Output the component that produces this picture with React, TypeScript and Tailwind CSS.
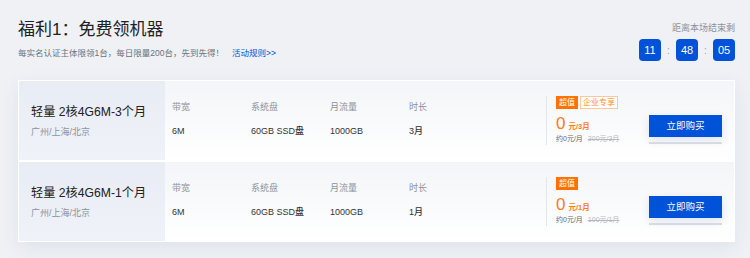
import React from "react";

type Row = {
  title: string;
  duration: string;
  unit: string;
  orig: string;
  enterprise: boolean;
};

const rows: Row[] = [
  { title: "轻量 2核4G6M-3个月", duration: "3月", unit: "元/3月", orig: "300元/3月", enterprise: true },
  { title: "轻量 2核4G6M-1个月", duration: "1月", unit: "元/1月", orig: "100元/1月", enterprise: false },
];

function Spec({ label, value }: { label: string; value: string }) {
  return (
    <div className="w-[79px] flex flex-col pt-[20px]">
      <div className="text-[9px] leading-[12px] text-[#8d929c]">{label}</div>
      <div className="mt-[12px] text-[9px] leading-[12px] text-[#333] font-medium">{value}</div>
    </div>
  );
}

function Card({ r }: { r: Row }) {
  return (
    <div className="flex h-[79px]">
      <div className="w-[146px] bg-gradient-to-b from-[#e8ecf4] to-[#eff2f9] pl-[12px] pt-[24px] flex flex-col">
        <div className="text-[12.2px] leading-[14px] text-[#222]">{r.title}</div>
        <div className="mt-[7px] text-[9px] leading-[12px] text-[#8d929c]">广州/上海/北京</div>
      </div>
      <div className="flex-1 flex bg-gradient-to-b from-[#f3f5f8] to-white">
        <div className="flex pl-[7px]">
          <Spec label="带宽" value="6M" />
          <Spec label="系统盘" value="60GB SSD盘" />
          <Spec label="月流量" value="1000GB" />
          <Spec label="时长" value={r.duration} />
        </div>
        <div className="w-[58px]" />
        <div className="w-px h-[49px] mt-[15px] bg-[#e3e6eb]" />
        <div className="flex-1 pl-[9px] pt-[15px] flex flex-col">
          <div className="flex gap-[2px] h-[13px]">
            <div className="h-[13px] w-[22px] text-center bg-[#ff7200] text-white text-[8px] leading-[13px]">超值</div>
            {r.enterprise && (
              <div className="h-[13px] w-[38px] text-center border border-[#ffc79b] text-[#ff8a2b] text-[8px] leading-[11px] bg-white">
                企业专享
              </div>
            )}
          </div>
          <div className="mt-[6px] flex items-baseline h-[17px]">
            <span className="text-[17px] leading-[17px] text-[#ff7a1a]">0</span>
            <span className="ml-[3px] text-[7.5px] font-bold text-[#ff7a1a]">{r.unit}</span>
          </div>
          <div className="mt-[2px] flex items-center h-[10px] text-[7px] leading-[10px]">
            <span className="text-[#666]">约0元/月</span>
            <span className="ml-[5px] text-[#b4b8bf] line-through">{r.orig}</span>
          </div>
        </div>
        <div className="w-[73px] pt-[34px] flex flex-col">
          <div className="h-[22px] bg-[#0052d9] text-white text-[9.5px] flex items-center justify-center shadow-[0_3px_10px_rgba(0,40,120,0.12)]">
            立即购买
          </div>
          <div className="mt-[5px] h-[2px] bg-[#d6dae1]" />
        </div>
        <div className="w-[12px]" />
      </div>
    </div>
  );
}

export default function App() {
  return (
    <div className="w-[750px] h-[258px] bg-[#eff1f5] pl-[18px] pr-[15px] overflow-hidden font-['Liberation_Sans','Noto_Sans_CJK_SC',sans-serif]">
      <div className="h-[80px] pt-[20px] flex justify-between">
        <div className="flex flex-col">
          <div className="text-[17px] leading-[20px] text-[#222]">福利1：免费领机器</div>
          <div className="mt-[7px] flex text-[8.5px] leading-[12px]">
            <span className="text-[#6b717c]">每实名认证主体限领1台，每日限量200台，先到先得！</span>
            <span className="ml-[8px] text-[#0052d9]">活动规则&gt;&gt;</span>
          </div>
        </div>
        <div className="flex flex-col items-end mt-[2px]">
          <div className="text-[9px] leading-[12px] text-[#8d929c]">距离本场结束剩</div>
          <div className="mt-[5px] flex items-center">
            <div className="w-[22px] h-[22px] rounded-[4px] bg-[#0052d9] text-white text-[11px] flex items-center justify-center">11</div>
            <div className="w-[15px] text-center text-[#9aa0aa] text-[10px]">:</div>
            <div className="w-[22px] h-[22px] rounded-[4px] bg-[#0052d9] text-white text-[11px] flex items-center justify-center">48</div>
            <div className="w-[15px] text-center text-[#9aa0aa] text-[10px]">:</div>
            <div className="w-[22px] h-[22px] rounded-[4px] bg-[#0052d9] text-white text-[11px] flex items-center justify-center">05</div>
          </div>
        </div>
      </div>
      <div className="bg-white p-px flex flex-col gap-[2px] shadow-[0_6px_18px_rgba(40,60,100,0.08)]">
        {rows.map((r) => (
          <Card key={r.title} r={r} />
        ))}
      </div>
    </div>
  );
}
